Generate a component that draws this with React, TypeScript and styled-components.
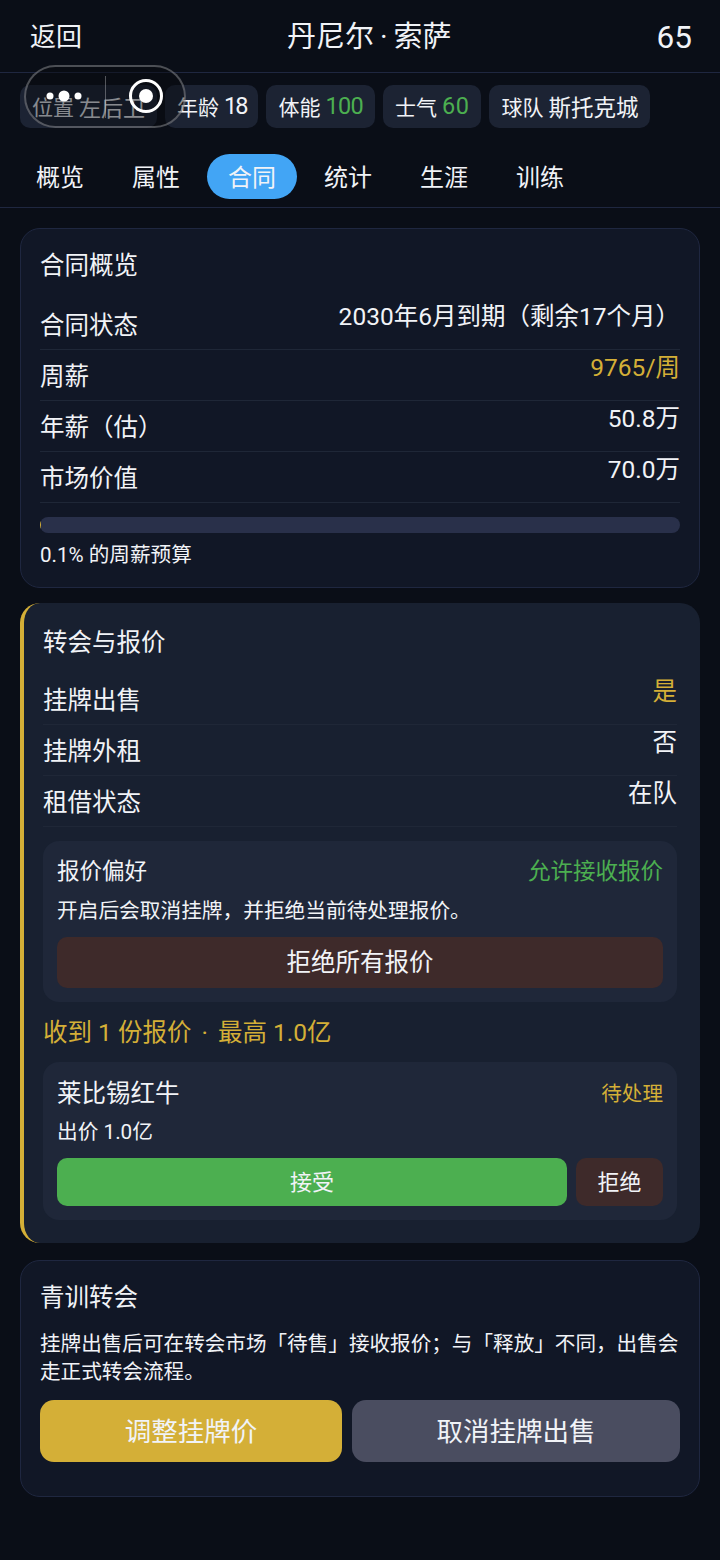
import React from 'react'
import styled, { createGlobalStyle } from 'styled-components'

const GlobalStyle = createGlobalStyle`
  html, body {
    margin: 0;
    padding: 0;
    background: #0a0e17;
  }
  * {
    box-sizing: border-box;
  }
`;

const gold = '#d4af37';
const green = '#4caf50';

const Page = styled.div`
  position: relative;
  width: 720px;
  height: 1560px;
  overflow: hidden;
  background: #0a0e17;
  color: #f1f3f7;
  font-family: Roboto, "Noto Sans CJK SC", sans-serif;
`;

const TopBar = styled.header`
  height: 73px;
  padding: 0 28px 4px 30px;
  display: flex;
  align-items: center;
  justify-content: space-between;
  border-bottom: 1px solid #1f2740;
`;

const BackLink = styled.span`
  font-size: 26px;
`;

const PlayerName = styled.span`
  font-size: 29px;
`;

const NameDot = styled.span`
  margin: 0 6px;
`;

const Rating = styled.span`
  margin-top: 6px;
  font-size: 31.5px;
`;

const ChipRow = styled.div`
  display: flex;
  gap: 8px;
  padding: 12px 20px 0;
`;

const Chip = styled.div`
  height: 43px;
  padding: 0 12px 2px;
  display: flex;
  align-items: center;
  gap: 5px;
  border-radius: 10px;
  background: #1c2333;
  font-size: 21px;
`;

const ChipValue = styled.span<{ $color?: string; $size?: number; $spacing?: number }>`
  font-size: ${p => p.$size || 23.5}px;
  letter-spacing: ${p => p.$spacing || 0}px;
  color: ${p => p.$color || 'inherit'};
`;

const Tabs = styled.nav`
  display: flex;
  gap: 6px;
  margin-top: 26px;
  padding: 0 15px 8px;
  border-bottom: 1px solid #1f2740;
`;

const Tab = styled.div<{ $active?: boolean }>`
  width: 90px;
  height: 45px;
  padding-bottom: 2px;
  display: flex;
  align-items: center;
  justify-content: center;
  border-radius: 23px;
  font-size: 24px;
  background: ${p => (p.$active ? '#42a5f5' : 'transparent')};
`;

const Content = styled.main`
  display: flex;
  flex-direction: column;
  gap: 15px;
  padding: 20px;
`;

const Card = styled.section<{ $spaced?: boolean }>`
  padding: 21px 19px 20px;
  border: 1px solid #1f2740;
  border-radius: 20px;
  background: #111726;
  margin-top: ${p => (p.$spaced ? '2px' : '0')};
`;

const TransferCard = styled.section`
  padding: 24px 23px 23px 19px;
  border-left: 4px solid ${gold};
  border-radius: 20px;
  background: #182030;
`;

const CardTitle = styled.h2<{ $tight?: boolean }>`
  margin: 0 0 ${p => (p.$tight ? '15px' : '17px')};
  font-size: 24.5px;
  font-weight: 400;
  line-height: 32px;
`;

const Row = styled.div`
  display: flex;
  justify-content: space-between;
  align-items: flex-start;
  padding-bottom: 6px;
  border-bottom: 1px solid #1f2737;
  font-size: 24.5px;
  line-height: 34px;
`;

const RowLabel = styled.span`
  padding-top: 10px;
`;

const RowValue = styled.span<{ $gold?: boolean }>`
  padding-top: 1px;
  color: ${p => (p.$gold ? gold : 'inherit')};
`;

const BudgetTrack = styled.div`
  height: 16px;
  margin-top: 14px;
  border-radius: 8px;
  overflow: hidden;
  background: #29304a;
`;

const BudgetFill = styled.div`
  height: 100%;
  min-width: 1px;
  background: ${gold};
`;

const Caption = styled.div`
  margin: 8px 0 -2px;
  font-size: 20.6px;
  line-height: 28px;
`;

const InnerBox = styled.div`
  padding: 14px;
  border-radius: 16px;
  background: #1f2739;
`;

const PreferenceBox = styled(InnerBox)`
  margin-top: 14px;
`;

const SpreadRow = styled.div<{ $nudge?: number }>`
  display: flex;
  justify-content: space-between;
  align-items: center;
  padding-top: ${p => p.$nudge || 0}px;
  line-height: 32px;
`;

const BoxHeading = styled.span<{ $size: number; $color?: string }>`
  font-size: ${p => p.$size}px;
  color: ${p => p.$color || 'inherit'};
`;

const BoxText = styled.div`
  margin-top: 10px;
  font-size: 20.7px;
  line-height: 28px;
`;

const OfferPrice = styled(BoxText)`
  margin-top: 8px;
`;

const RejectAllButton = styled.button`
  display: block;
  width: 100%;
  height: 51px;
  margin-top: 12px;
  padding: 0 0 4px;
  border: none;
  border-radius: 10px;
  background: #3e2a2a;
  color: inherit;
  font: inherit;
  font-size: 24.5px;
`;

const OfferSummary = styled.div`
  margin: 14px 0 12px;
  color: ${gold};
  font-size: 24.5px;
  line-height: 34px;
`;

const SummaryDot = styled.span`
  margin: 0 4px;
`;

const OfferActions = styled.div`
  display: flex;
  gap: 9px;
  margin-top: 12px;
`;

const OfferButton = styled.button<{ $accept?: boolean }>`
  flex: ${p => (p.$accept ? '1' : '0 0 87px')};
  height: 48px;
  padding: 0 0 4px;
  border: none;
  border-radius: 10px;
  background: ${p => (p.$accept ? green : '#3e2a2a')};
  color: inherit;
  font: inherit;
  font-size: 22px;
`;

const Paragraph = styled.p`
  margin: -1px 0 0;
  font-size: 20.6px;
  line-height: 28px;
`;

const FooterActions = styled.div`
  display: flex;
  gap: 10px;
  margin: 14px 0 14px;
`;

const FooterButton = styled.button<{ $primary?: boolean }>`
  flex: ${p => (p.$primary ? '0 0 302px' : '1')};
  height: 62px;
  padding: 0 0 4px;
  border: none;
  border-radius: 14px;
  background: ${p => (p.$primary ? gold : '#4a4d60')};
  color: inherit;
  font: inherit;
  font-size: 26.5px;
`;

// system capsule drawn by the mini-program host, floats over the chips
const Capsule = styled.div`
  position: absolute;
  top: 65px;
  left: 24px;
  width: 162px;
  height: 63px;
  border: 2px solid rgba(255, 255, 255, 0.28);
  border-radius: 32px;
  background: rgba(8, 10, 16, 0.45);
`;

const CapsuleDivider = styled.div`
  position: absolute;
  top: 9px;
  left: 79px;
  width: 1px;
  height: 42px;
  background: rgba(255, 255, 255, 0.3);
`;

const CapsuleIcons = styled.svg`
  position: absolute;
  top: 0;
  left: 0;
`;

function PlayerCapsule() {
  return (
    <Capsule>
      <CapsuleDivider />
      <CapsuleIcons width="158" height="59" viewBox="0 0 158 59">
        <circle cx="24" cy="29" r="3.5" fill="#fff" />
        <circle cx="38" cy="29" r="5.5" fill="#fff" />
        <circle cx="52" cy="29" r="3.5" fill="#fff" />
        <circle cx="120" cy="29" r="15.5" fill="none" stroke="#fff" strokeWidth="3" />
        <circle cx="120" cy="29" r="7" fill="#fff" />
      </CapsuleIcons>
    </Capsule>
  )
}

const tabs = ['概览', '属性', '合同', '统计', '生涯', '训练'];

export default function App() {
  return (
    <Page>
      <GlobalStyle />
      <TopBar>
        <BackLink>返回</BackLink>
        <PlayerName>丹尼尔<NameDot>·</NameDot>索萨</PlayerName>
        <Rating>65</Rating>
      </TopBar>

      <ChipRow>
        <Chip>位置 <ChipValue $size={22}>左后卫</ChipValue></Chip>
        <Chip>年龄 <ChipValue $spacing={-2}>18</ChipValue></Chip>
        <Chip>体能 <ChipValue $color={green} $spacing={-0.7}>100</ChipValue></Chip>
        <Chip>士气 <ChipValue $color={green} $spacing={0.5}>60</ChipValue></Chip>
        <Chip>球队 <ChipValue $size={22.5}>斯托克城</ChipValue></Chip>
      </ChipRow>

      <Tabs>
        {tabs.map(t => (
          <Tab key={t} $active={t === '合同'}>{t}</Tab>
        ))}
      </Tabs>

      <Content>
        <Card>
          <CardTitle>合同概览</CardTitle>
          <Row>
            <RowLabel>合同状态</RowLabel>
            <RowValue>2030年6月到期（剩余17个月）</RowValue>
          </Row>
          <Row>
            <RowLabel>周薪</RowLabel>
            <RowValue $gold>9765/周</RowValue>
          </Row>
          <Row>
            <RowLabel>年薪（估）</RowLabel>
            <RowValue>50.8万</RowValue>
          </Row>
          <Row>
            <RowLabel>市场价值</RowLabel>
            <RowValue>70.0万</RowValue>
          </Row>
          <BudgetTrack>
            <BudgetFill style={{ width: '0.1%' }} />
          </BudgetTrack>
          <Caption>0.1% 的周薪预算</Caption>
        </Card>

        <TransferCard>
          <CardTitle $tight>转会与报价</CardTitle>
          <Row>
            <RowLabel>挂牌出售</RowLabel>
            <RowValue $gold>是</RowValue>
          </Row>
          <Row>
            <RowLabel>挂牌外租</RowLabel>
            <RowValue>否</RowValue>
          </Row>
          <Row>
            <RowLabel>租借状态</RowLabel>
            <RowValue>在队</RowValue>
          </Row>

          <PreferenceBox>
            <SpreadRow>
              <BoxHeading $size={22.5}>报价偏好</BoxHeading>
              <BoxHeading $size={22.5} $color={green}>允许接收报价</BoxHeading>
            </SpreadRow>
            <BoxText>开启后会取消挂牌，并拒绝当前待处理报价。</BoxText>
            <RejectAllButton>拒绝所有报价</RejectAllButton>
          </PreferenceBox>

          <OfferSummary>收到 1 份报价<SummaryDot> · </SummaryDot>最高 1.0亿</OfferSummary>

          <InnerBox>
            <SpreadRow $nudge={2}>
              <BoxHeading $size={24.5}>莱比锡红牛</BoxHeading>
              <BoxHeading $size={20.6} $color={gold}>待处理</BoxHeading>
            </SpreadRow>
            <OfferPrice>出价 1.0亿</OfferPrice>
            <OfferActions>
              <OfferButton $accept>接受</OfferButton>
              <OfferButton>拒绝</OfferButton>
            </OfferActions>
          </InnerBox>
        </TransferCard>

        <Card $spaced>
          <CardTitle>青训转会</CardTitle>
          <Paragraph>
            挂牌出售后可在转会市场「待售」接收报价；与「释放」不同，出售会走正式转会流程。
          </Paragraph>
          <FooterActions>
            <FooterButton $primary>调整挂牌价</FooterButton>
            <FooterButton>取消挂牌出售</FooterButton>
          </FooterActions>
        </Card>
      </Content>

      <PlayerCapsule />
    </Page>
  )
}
